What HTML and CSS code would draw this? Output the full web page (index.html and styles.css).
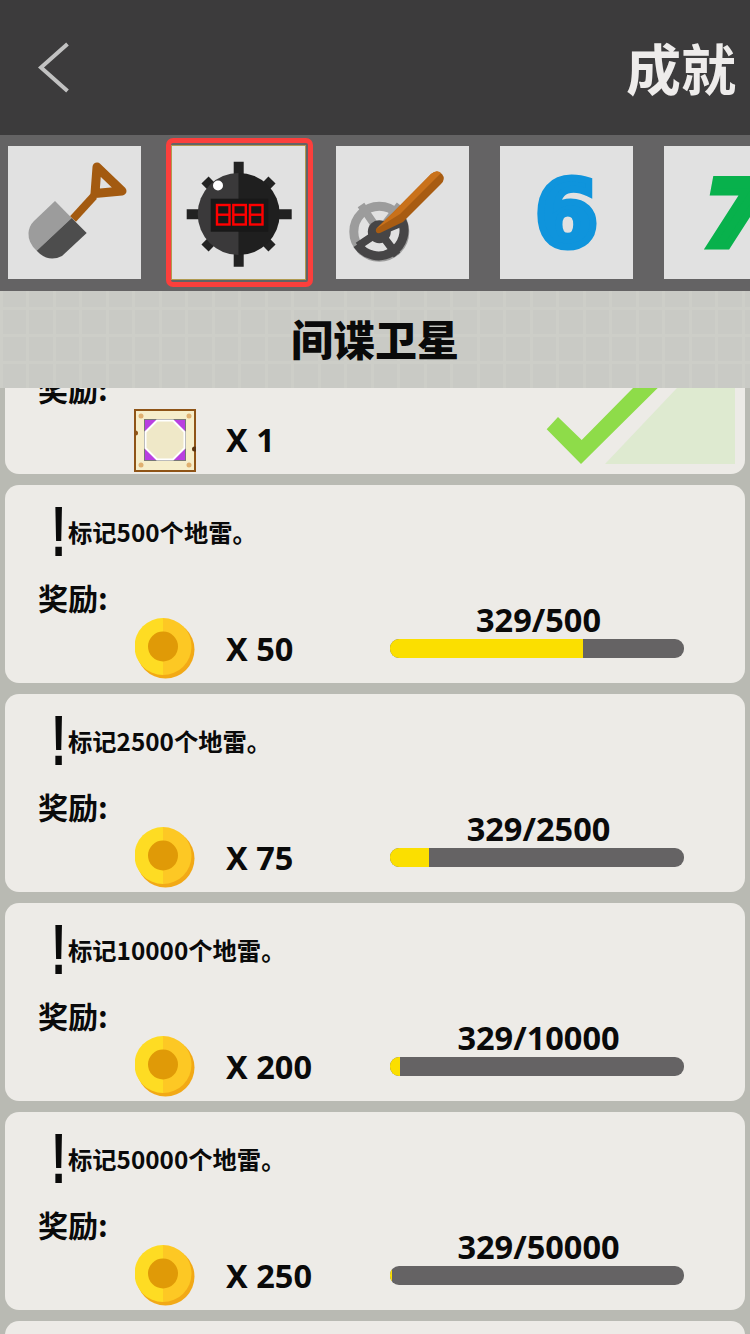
FILE: index.html
```html
<!DOCTYPE html>
<html lang="zh-CN">
<head>
  <meta charset="UTF-8" />
  <meta name="viewport" content="width=device-width, initial-scale=1.0" />
  <title>成就</title>
  <link rel="stylesheet" href="styles.css">
</head>
<body>

  <!-- Top bar -->
  <header class="topbar">
    <svg class="back" viewBox="0 0 40 60" width="40" height="60">
      <polyline points="32.500,6 6,29.500 32.500,53" fill="none" stroke="#c2c2c2" stroke-width="4"/>
    </svg>
    <h1>成就</h1>
  </header>

  <!-- Category tabs -->
  <nav class="tabs">
    <div class="tile">
      <svg viewBox="8 146 133 133" width="133" height="133">
        <path d="M73 219 L94 196" stroke="#a35a10" stroke-width="8" fill="none"/>
        <path d="M97 167 L122 191 L95 193.500 Z" stroke="#a35a10" stroke-width="9" stroke-linejoin="round" fill="none"/>
        <path d="M55 201 L71.700 218 L36.700 250.700 Q28 243 28.500 233 Q29 226 34 221 Z" fill="#9c9c9c"/>
        <path d="M71.700 218 L86.700 233 L62 256 Q48 263 36.700 250.700 Z" fill="#4d4d4d"/>
      </svg>
    </div>

    <div class="tile tile-active">
      <svg viewBox="8 146 133 133" width="133" height="133">
        <g transform="translate(-164 0)" stroke="#222" stroke-width="10">
          <path d="M238.700 161.700 V266.700 M186.700 214.300 H291.700"/>
          <path d="M205 180 L272 248 M272 180 L205 248"/>
        </g>
        <g transform="translate(-164 0)">
          <path d="M238.700 173 A41 41 0 0 0 238.700 255 Z" fill="#3a393a"/>
          <path d="M238.700 173 A41 41 0 0 1 238.700 255 Z" fill="#1f1f1f"/>
          <circle cx="218" cy="185.500" r="5" fill="#fff"/>
          <rect x="210.700" y="198.700" width="57.600" height="33" fill="#181818"/>
          <g fill="none" stroke="#f00" stroke-width="2.400">
            <rect x="217" y="205" width="12.500" height="19.500"/>
            <path d="M217 214.700 H229.500"/>
            <rect x="233.300" y="205" width="12.500" height="19.500"/>
            <path d="M233.300 214.700 H245.800"/>
            <rect x="250" y="205" width="12.500" height="19.500"/>
            <path d="M250 214.700 H262.500"/>
          </g>
        </g>
      </svg>
    </div>

    <div class="tile">
      <svg viewBox="336 146 133 133" width="133" height="133">
        <circle cx="379.300" cy="231.700" r="25.500" fill="none" stroke="#9c9c9c" stroke-width="9"/>
        <path d="M379.300 231.700 L361 205 M379.300 231.700 L400 205" stroke="#9c9c9c" stroke-width="8"/>
        <path d="M357.300 244.500 A25.500 25.500 0 0 0 401.300 218.900" fill="none" stroke="#464546" stroke-width="9"/>
        <path d="M379.300 231.700 L358 246 M379.300 231.700 L397 255 M379.300 231.700 L403 222" stroke="#464546" stroke-width="8"/>
        <circle cx="379.300" cy="231.700" r="11.500" fill="#464546"/>
        <path d="M380 233 Q375 234 376 229 L393.500 212 L431 174 Q437 169 442 174 Q446 179 441 184 L403 222 Z" fill="#a85c12"/>
        <path d="M376 229 L393.500 212 L431 174 Q437 169 441 173 L400 214 Z" fill="#c9711a"/>
      </svg>
    </div>

    <div class="tile"><span class="num num-blue">6</span></div>
    <div class="tile"><span class="num num-green">7</span></div>
  </nav>

  <!-- Selected achievement name -->
  <div class="title-band">
    <h2>间谍卫星</h2>
  </div>

  <!-- Achievement levels -->
  <main class="list">

    <section class="card card-done">
      <div class="reward-label">奖励:</div>
      <div class="reward">
        <svg class="reward-icon" viewBox="0 0 62 63" width="62" height="63">
          <rect x="1" y="1" width="60" height="61" fill="#f6eecb" stroke="#8f5417" stroke-width="2"/>
          <circle cx="1.500" cy="24" r="2.500" fill="#8f5417"/>
          <circle cx="60.500" cy="40" r="2.500" fill="#5c3410"/>
          <circle cx="7" cy="7" r="2.500" fill="#e0b070"/>
          <circle cx="55" cy="7" r="2.500" fill="#e0b070"/>
          <circle cx="7" cy="56" r="2.500" fill="#e0b070"/>
          <circle cx="55" cy="56" r="2.500" fill="#e0b070"/>
          <rect x="10.500" y="10.500" width="41" height="41" fill="#b93fe0" stroke="#777" stroke-width="1"/>
          <polygon points="23,11.500 39,11.500 50.500,23 50.500,39 39,50.500 23,50.500 11.500,39 11.500,23" fill="#efe8c8" stroke="#fff" stroke-width="2"/>
        </svg>
        <span class="amount">X 1</span>
      </div>
      <svg class="done-mark" viewBox="540 388 195 76" width="195" height="76">
        <polygon points="605,464 677,388 735,388 735,464" fill="#deead0"/>
        <polygon points="546.700,429.300 558,417 581.700,440 633,388 657.700,388 581,464" fill="#8edc49"/>
      </svg>
    </section>

    <section class="card">
      <div class="desc"><span class="bang">!</span><span class="desc-text">标记500个地雷。</span></div>
      <div class="reward-label">奖励:</div>
      <div class="reward">
        <svg class="reward-icon" viewBox="0 0 60 61" width="60" height="61">
          <circle cx="30.500" cy="31.500" r="29" fill="#f2a916"/>
          <path d="M28 0 A28.500 28.500 0 0 0 28 57 Z" fill="#fedc23"/>
          <path d="M28 0 A28.500 28.500 0 0 1 28 57 Z" fill="#fdc824"/>
          <circle cx="28" cy="28.500" r="15" fill="#e09a07"/>
        </svg>
        <span class="amount">X 50</span>
        <div class="progress">
          <div class="progress-label">329/500</div>
          <div class="bar"><div class="bar-fill" style="width:65.8%"></div></div>
        </div>
      </div>
    </section>

    <section class="card">
      <div class="desc"><span class="bang">!</span><span class="desc-text">标记2500个地雷。</span></div>
      <div class="reward-label">奖励:</div>
      <div class="reward">
        <svg class="reward-icon" viewBox="0 0 60 61" width="60" height="61">
          <circle cx="30.500" cy="31.500" r="29" fill="#f2a916"/>
          <path d="M28 0 A28.500 28.500 0 0 0 28 57 Z" fill="#fedc23"/>
          <path d="M28 0 A28.500 28.500 0 0 1 28 57 Z" fill="#fdc824"/>
          <circle cx="28" cy="28.500" r="15" fill="#e09a07"/>
        </svg>
        <span class="amount">X 75</span>
        <div class="progress">
          <div class="progress-label">329/2500</div>
          <div class="bar"><div class="bar-fill" style="width:13.16%"></div></div>
        </div>
      </div>
    </section>

    <section class="card">
      <div class="desc"><span class="bang">!</span><span class="desc-text">标记10000个地雷。</span></div>
      <div class="reward-label">奖励:</div>
      <div class="reward">
        <svg class="reward-icon" viewBox="0 0 60 61" width="60" height="61">
          <circle cx="30.500" cy="31.500" r="29" fill="#f2a916"/>
          <path d="M28 0 A28.500 28.500 0 0 0 28 57 Z" fill="#fedc23"/>
          <path d="M28 0 A28.500 28.500 0 0 1 28 57 Z" fill="#fdc824"/>
          <circle cx="28" cy="28.500" r="15" fill="#e09a07"/>
        </svg>
        <span class="amount">X 200</span>
        <div class="progress">
          <div class="progress-label">329/10000</div>
          <div class="bar"><div class="bar-fill" style="width:3.29%"></div></div>
        </div>
      </div>
    </section>

    <section class="card">
      <div class="desc"><span class="bang">!</span><span class="desc-text">标记50000个地雷。</span></div>
      <div class="reward-label">奖励:</div>
      <div class="reward">
        <svg class="reward-icon" viewBox="0 0 60 61" width="60" height="61">
          <circle cx="30.500" cy="31.500" r="29" fill="#f2a916"/>
          <path d="M28 0 A28.500 28.500 0 0 0 28 57 Z" fill="#fedc23"/>
          <path d="M28 0 A28.500 28.500 0 0 1 28 57 Z" fill="#fdc824"/>
          <circle cx="28" cy="28.500" r="15" fill="#e09a07"/>
        </svg>
        <span class="amount">X 250</span>
        <div class="progress">
          <div class="progress-label">329/50000</div>
          <div class="bar"><div class="bar-fill" style="width:0.66%"></div></div>
        </div>
      </div>
    </section>

    <section class="card"></section>
  </main>

</body>
</html>
```

FILE: styles.css
```css
* {
  box-sizing: border-box;
}

html, body {
  margin: 0;
  padding: 0;
  height: 1334px;
  overflow: hidden;
}

body {
  display: flex;
  flex-direction: column;
  background: #b9bab3;
  font-family: "Noto Sans", "Noto Sans CJK SC", sans-serif;
  color: #0a0a0a;
}

.topbar {
  height: 135px;
  flex: none;
  background: #3c3b3c;
  display: flex;
  align-items: center;
  justify-content: space-between;
  padding: 0 14px 0 35px;
}

.topbar h1 {
  margin: 0 0 4px;
  font-family: "Noto Sans CJK SC", sans-serif;
  font-size: 55px;
  line-height: 60px;
  font-weight: 700;
  color: #eeeceb;
}

.tabs {
  height: 156px;
  flex: none;
  background: #646364;
  display: flex;
  gap: 31px;
  padding: 11px 0 0 8px;
  overflow: hidden;
}

.tile {
  width: 133px;
  height: 133px;
  flex: none;
  background: #e1e1e1;
  position: relative;
  overflow: hidden;
  display: flex;
  align-items: center;
  justify-content: center;
}

.tile svg {
  display: block;
}

.tile-active {
  overflow: visible;
  box-shadow: 0 0 0 1px #b09a50;
}

.tile-active::after {
  content: "";
  position: absolute;
  left: -6px;
  top: -8px;
  right: -8px;
  bottom: -8px;
  border: 5px solid #fb3f3c;
  border-radius: 7px;
}

.num {
  font-family: "DejaVu Sans", sans-serif;
  font-weight: 700;
  font-size: 90px;
  line-height: 1;
  padding-top: 4px;
}

.num-blue {
  color: #0f94dc;
  -webkit-text-stroke: 7px #0f94dc;
}

.num-green {
  color: #08b14c;
  -webkit-text-stroke: 7px #08b14c;
  font-style: italic;
  margin-left: 8px;
}

.title-band {
  height: 97px;
  flex: none;
  background-color: #c9cac5;
  background-image:
    repeating-linear-gradient(90deg, #cdcec8 0 3px, transparent 3px 26.5px),
    repeating-linear-gradient(0deg, transparent 0 24px, #cdcec8 24px 27px);
  display: flex;
  align-items: center;
  justify-content: center;
}

.title-band h2 {
  margin: 0 0 4px;
  font-family: "Noto Sans CJK SC", sans-serif;
  font-size: 42px;
  line-height: 50px;
  font-weight: 900;
  color: #0a0a0a;
}

.list {
  flex: 1;
  min-height: 0;
  overflow: hidden;
  display: flex;
  flex-direction: column;
  gap: 11px;
  padding: 0 5px;
}

.card {
  flex: none;
  height: 198px;
  background: #edebe7;
  border-radius: 14px;
  padding-top: 21px;
  position: relative;
}

/* top of this card is scrolled away under the title band */
.card-done {
  height: 100px;
  padding-top: 0;
  margin-top: -14px;
  border-radius: 0 0 14px 14px;
}

.desc {
  height: 77px;
  display: flex;
  align-items: flex-start;
  padding-left: 46px;
  font-family: "Noto Sans CJK SC", sans-serif;
  font-size: 24.3px;
  line-height: 36px;
  font-weight: 700;
}

.desc-text {
  margin-top: 8px;
}

.bang {
  width: 24px;
  flex: none;
  margin: -2px -7px 0 0;
  font-family: "Liberation Sans", sans-serif;
  font-size: 71px;
  line-height: 56px;
  transform: scaleX(0.65);
  transform-origin: left center;
}

.reward-label {
  height: 35px;
  padding-left: 33px;
  font-family: "Noto Sans CJK SC", sans-serif;
  font-size: 30px;
  line-height: 28px;
  font-weight: 700;
}

.reward {
  display: flex;
  align-items: flex-start;
  padding-left: 130px;
}

.reward-icon {
  display: block;
  flex: none;
}

.amount {
  width: 164px;
  flex: none;
  margin-left: 31px;
  font-size: 32.5px;
  line-height: 61px;
  font-weight: 700;
  white-space: nowrap;
}

.card-done .reward {
  padding-left: 129px;
}

.card-done .amount {
  margin-left: 30px;
}

.progress {
  width: 294px;
  flex: none;
  margin-top: -18px;
}

.progress-label {
  padding-left: 3px;
  text-align: center;
  font-size: 32.5px;
  line-height: 39px;
  font-weight: 700;
}

.bar {
  height: 19px;
  border-radius: 9px;
  background: #656364;
  overflow: hidden;
}

.bar-fill {
  height: 100%;
  background: #fbdf00;
}

.done-mark {
  position: absolute;
  right: 10px;
  bottom: 10px;
  display: block;
}
```
